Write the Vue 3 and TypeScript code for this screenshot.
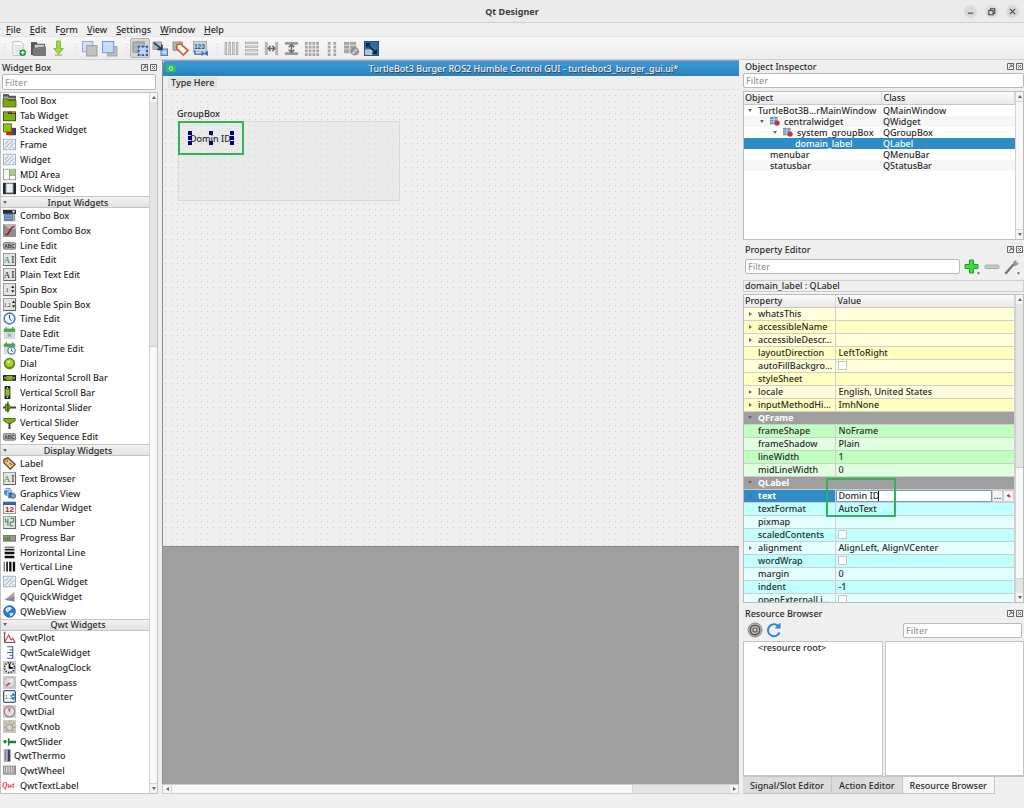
<script setup lang="ts">
import { ref } from 'vue'

interface Item { icon: string; label: string; tight?: boolean }
interface Section { title: string; items: Item[] }
interface Prop {
  name: string
  value?: string
  kind?: 'check' | 'edit' | 'group'
  arrow?: boolean
  tone: string
}

const menus = [
  { key: 'F', pre: '', post: 'ile' },
  { key: 'E', pre: '', post: 'dit' },
  { key: 'o', pre: 'F', post: 'rm' },
  { key: 'V', pre: '', post: 'iew' },
  { key: 'S', pre: '', post: 'ettings' },
  { key: 'W', pre: '', post: 'indow' },
  { key: 'H', pre: '', post: 'elp' },
]

const hatch = '<rect x=".5" y="1.5" width="15" height="13" fill="#f4f4f4" stroke="#7fa8dc"/><path d="M2 8 7 3M2 13 12 3M7 13l7-7M12 13l2-2" stroke="#bdbdbd" stroke-width="1.6"/>'
const paper = '<rect x=".5" y=".5" width="15" height="15" fill="#e3e3e3" stroke="#8b8b8b"/><path d="M15.5 1v14.500H1" fill="none" stroke="#555"/>'
const clock = '<circle cx="8" cy="8" r="6.600" fill="#f3f8ff" stroke="#4a7fc4" stroke-width="2"/><path d="M8 3.500V8l2.500 3" fill="none" stroke="#345" stroke-width="1.200"/>'
const keycap = '<rect x=".5" y="4.500" width="15" height="8" rx="1.500" fill="#b9b9b9" stroke="#666"/><text x="8" y="11" text-anchor="middle" font-size="6" font-weight="700" font-family="Liberation Sans, sans-serif" fill="#333">ABC</text>'
const serifText = (t: string, x: number, size: number, fill: string) =>
  `<text x="${x}" y="12.500" font-size="${size}" font-family="Liberation Serif, serif" fill="${fill}">${t}</text>`

const icons: Record<string, string> = {
  toolbox: '<path d="M0 0h7l1 2h8v13H0z" fill="#5d5d5d"/><path d="M1 3h5l1 2h8v1H1z" fill="#aaa"/><path d="M0 6h6l1 2h9v8H0z" fill="#7ba312" stroke="#4b6a05"/>',
  tab: '<path d="M0 3h16v12H0z" fill="#2d3a12"/><path d="M1 4h5v2h9v8H1z" fill="#7fb30f"/><path d="M7 3h3v2H7z" fill="#d33"/><path d="M11 3h4v2h-4z" fill="#e08a2a"/>',
  stack: '<rect x="7" y="6" width="9" height="9" fill="#1b3f9c"/><rect x="4" y="6" width="9" height="9" fill="#c42a12"/><rect x=".5" y="1" width="10" height="10" fill="#8fc31a" stroke="#48650b"/>',
  hatch,
  mdi: '<rect x=".5" y="1.500" width="15" height="13" fill="#fafafa" stroke="#8a8a8a"/><path d="M8 2h7v7H8z" fill="#a9cf7a"/><path d="M8 2v12M8 9h7" stroke="#888"/>',
  dock: '<path d="M0 1h16v14H0z" fill="#1f2733"/><path d="M4 2h8v11H4z" fill="#e9eef7"/><path d="M3.500 2.500h9v11h-9z" fill="none" stroke="#fff" stroke-dasharray="1 1"/>',
  combo: '<path d="M0 1h16v5H0z" fill="#2b2f36"/><path d="M11 2h4l-2 3z" fill="#fff"/><path d="M1 6h12v9H1z" fill="#5f81ad"/><path d="M2 8.500h10M2 11.500h10" stroke="#9db7da"/><path d="M13 6h2v9h-2z" fill="#999"/>',
  font: '<rect width="16" height="16" fill="#8d8d8d"/><path d="M0 0h16v6H8z" fill="#b9b9b9"/><path d="M3 13c4 1 4-3 6-6s2-4 5-4" fill="none" stroke="#b01414" stroke-width="2"/>',
  keycap,
  textedit: paper + serifText('A', 1, 11, '#2b8a3a') + serifText('I', 10, 12, '#333'),
  plain: paper + serifText('A', 1, 11, '#222') + serifText('I', 10, 12, '#222'),
  spin: paper + '<text x="3" y="11" font-size="8" font-family="Liberation Serif, serif" fill="#333">1</text><path d="m10 6 2-3 2 3zM10 9l2 3 2-3z" fill="#222"/>',
  dspin: paper + '<text x="1" y="11" font-size="7" font-family="Liberation Serif, serif" fill="#333">1.2</text><path d="m11 6 2-3 2 3zM11 9l2 3 2-3z" fill="#222"/>',
  clock,
  date: '<rect x="1" y="2" width="14" height="13" fill="#d9d9d9"/><rect x="1" y="2" width="14" height="4" fill="#3fae3f"/><path d="M4 0v3M12 0v3" stroke="#777" stroke-width="1.500"/><path d="M6 8h4v4H6z" fill="#8fb4e4"/>',
  datetime: '<rect x="1" y="2" width="14" height="13" fill="#d9d9d9"/><rect x="1" y="2" width="14" height="4" fill="#3fae3f"/><path d="M4 0v3M12 0v3" stroke="#777" stroke-width="1.500"/><circle cx="10.500" cy="10.500" r="4.500" fill="#f3f8ff" stroke="#4a7fc4" stroke-width="1.500"/><path d="M10.500 8v3l2 1" fill="none" stroke="#345"/>',
  dial: '<circle cx="8" cy="8" r="6.500" fill="#6f9a10" stroke="#4c6a10"/><circle cx="8" cy="7.500" r="4.500" fill="#a8d62f"/><circle cx="7" cy="6" r="1.800" fill="#dff38d"/>',
  hscroll: '<rect x="0" y="5" width="16" height="7" fill="#222"/><rect x="4" y="6" width="8" height="5" fill="#7fb30f"/><path d="M1 8.500 3 7v3zM15 8.500 13 7v3z" fill="#fff"/>',
  vscroll: '<rect x="2" y="0" width="7" height="16" fill="#222"/><rect x="3" y="4" width="5" height="8" fill="#8fc31a"/><path d="M5.500 1 7 3H4zM5.500 15 7 13H4z" fill="#fff"/>',
  hslider: '<path d="M0 8h16" stroke="#444" stroke-width="2.500"/><path d="M3 4h4l2 4-2 4H3z" fill="#7fb30f" stroke="#38520a"/><path d="M6 1v13" stroke="#4b6a05" stroke-width="2"/>',
  vslider: '<path d="M8 3v13" stroke="#444" stroke-width="2.500"/><path d="M1 3h14v3l-5 3H6L1 6z" fill="#7fb30f" stroke="#38520a"/>',
  label: '<path d="M1 3 6 1l9 8-6 6-8-8z" fill="#f3c183" stroke="#5c4326" stroke-width="1.500"/><circle cx="4.500" cy="4.500" r="1.200" fill="#fff" stroke="#5c4326"/><path d="m8 7 3 3" stroke="#8b5a22" stroke-width="1.500"/>',
  graphics: '<circle cx="6" cy="6" r="5" fill="#5c8fca"/><path d="M2 4c3-3 5 1 8-1" stroke="#cfe3fa" stroke-width="1.500" fill="none"/><rect x="6" y="6" width="6" height="8" fill="#3b6fb1" stroke="#e7f0fb"/><circle cx="12.500" cy="11" r="3" fill="#7aa8dc" stroke="#456"/>',
  calendar: '<rect x=".5" y="1.500" width="15" height="14" fill="#f4f4f4" stroke="#888"/><path d="M0 1h16v4H0z" fill="#3764a6"/><text x="8" y="14" text-anchor="middle" font-size="10" font-weight="700" font-family="Liberation Sans, sans-serif" fill="#c41616">12</text>',
  lcd: paper + '<path d="M3 3v4h3M6 3v9M9 3h4v4l-4 1v4h4" fill="none" stroke="#4d9465" stroke-width="1.500"/>',
  progress: '<rect x=".5" y="5.500" width="15" height="7" fill="#999" stroke="#666"/><path d="M2 7h7v5H2z" fill="#4d7d20"/><path d="M4 7v5M6.500 7v5" stroke="#8fc31a"/>',
  hline: '<path d="M2 1.500h12" stroke="#111"/><path d="M2 4.500h12" stroke="#111" stroke-width="2"/><path d="M2 8.500h12M2 13.500h12" stroke="#111" stroke-width="3"/>',
  vline: '<path d="M1.500 2v12" stroke="#111"/><path d="M5 2v12" stroke="#111" stroke-width="2"/><path d="M9 2v12M13.500 2v12" stroke="#111" stroke-width="2.800"/>',
  quick: '<path d="M2 12 14 2v12z" fill="#a8a8a8"/><path d="M2 12 14 8v6z" fill="#858585"/>',
  web: '<circle cx="8" cy="8" r="7.200" fill="#2f78c8" stroke="#2458a0"/><path d="M3 5c2-3 6-3 8-1-1 3-3 2-4 4s-4 1-4-3zM8 10c3-1 5 0 5 1-1 2-3 3-4 3z" fill="#cde4fb"/>',
  plot: '<path d="M2 2v12h13" fill="none" stroke="#345" stroke-width="1.200"/><path d="M2 14 7 5l3 6 2-2 3 5" fill="none" stroke="#e04848" stroke-width="1.500"/><path d="m.5 3 1.500-2 1.500 2" fill="none" stroke="#c33"/>',
  scale: '<path d="M12 0v16M12 1H5M12 5H8M12 8H5M12 11.500H8M12 15H5" fill="none" stroke="#4a55b5" stroke-width="1.300"/>',
  aclock: '<rect width="16" height="16" fill="#c9c9c9"/><circle cx="8" cy="8" r="6" fill="#eee" stroke="#333" stroke-width="2" stroke-dasharray="1.600 1.540"/><path d="M8 3v5.500h4" fill="none" stroke="#000" stroke-width="2"/>',
  compass: '<rect width="16" height="16" fill="#c9c9c9"/><circle cx="8" cy="8" r="6.500" fill="#dcdcdc" stroke="#b0b0b0"/><path d="m4 12 5-4" stroke="#e04040" stroke-width="2"/><path d="m8 8 4-4" stroke="#fff" stroke-width="2"/>',
  counter: '<rect x=".8" y=".8" width="14.400" height="14.400" rx="2" fill="#fff" stroke="#345e70" stroke-width="1.600"/><text x="2" y="11" font-size="7" font-family="Liberation Sans, sans-serif" fill="#1c70a8">1.3</text><path d="m10 7 2.500-4L15 7zM10 9l2.500 4L15 9z" fill="#1c70b8"/>',
  qdial: '<rect width="16" height="16" fill="#cfcfcf"/><circle cx="8" cy="8" r="6.500" fill="#e2dede" stroke="#888" stroke-width="1.400"/><path d="M8 8 6 3M8 8l1-5" stroke="#c03a3a"/>',
  knob: '<rect width="16" height="16" fill="#cbc7bd"/><circle cx="8" cy="9" r="4" fill="#d9d5ca" stroke="#8f8b80"/><path d="M8 1v2M2 3l2 2M14 3l-2 2M1 9h2M13 9h2M3 14l2-2M13 14l-2-2M9 8l2-2" stroke="#8f8b80"/>',
  qslider: '<path d="M0 8h16" stroke="#9ab89f"/><path d="M1 6h3v4H1zM6 4h2v9H6zM8 7h8v3H8z" fill="#1f7a3d"/>',
  thermo: '<rect x="1" y="0" width="8" height="16" fill="#aaa"/><path d="M3 2v12" stroke="#555" stroke-dasharray="1 1"/><rect x="6" y="1" width="3" height="14" fill="#3a3a80"/>',
  wheel: '<rect x=".5" y="2.500" width="15" height="10" fill="#ddd" stroke="#777"/><path d="M3 3v7M6 3v7M9 3v7M12 3v7M14 3v7M1 11h14" stroke="#777"/>',
  qwt: '<text x="-1" y="11" font-size="9" font-style="italic" font-weight="700" font-family="Liberation Serif, serif" fill="#f03030">Qwt</text>',
}

const sections: Section[] = [
  { title: '', items: [
    { icon: 'toolbox', label: 'Tool Box' }, { icon: 'tab', label: 'Tab Widget' }, { icon: 'stack', label: 'Stacked Widget' },
    { icon: 'hatch', label: 'Frame' }, { icon: 'hatch', label: 'Widget' }, { icon: 'mdi', label: 'MDI Area' }, { icon: 'dock', label: 'Dock Widget' },
  ] },
  { title: 'Input Widgets', items: [
    { icon: 'combo', label: 'Combo Box' }, { icon: 'font', label: 'Font Combo Box' }, { icon: 'keycap', label: 'Line Edit' },
    { icon: 'textedit', label: 'Text Edit' }, { icon: 'plain', label: 'Plain Text Edit' }, { icon: 'spin', label: 'Spin Box' },
    { icon: 'dspin', label: 'Double Spin Box' }, { icon: 'clock', label: 'Time Edit' }, { icon: 'date', label: 'Date Edit' },
    { icon: 'datetime', label: 'Date/Time Edit' }, { icon: 'dial', label: 'Dial' }, { icon: 'hscroll', label: 'Horizontal Scroll Bar' },
    { icon: 'vscroll', label: 'Vertical Scroll Bar' }, { icon: 'hslider', label: 'Horizontal Slider' }, { icon: 'vslider', label: 'Vertical Slider' },
    { icon: 'keycap', label: 'Key Sequence Edit' },
  ] },
  { title: 'Display Widgets', items: [
    { icon: 'label', label: 'Label' }, { icon: 'textedit', label: 'Text Browser' }, { icon: 'graphics', label: 'Graphics View' },
    { icon: 'calendar', label: 'Calendar Widget' }, { icon: 'lcd', label: 'LCD Number' }, { icon: 'progress', label: 'Progress Bar' },
    { icon: 'hline', label: 'Horizontal Line' }, { icon: 'vline', label: 'Vertical Line' }, { icon: 'hatch', label: 'OpenGL Widget' },
    { icon: 'quick', label: 'QQuickWidget' }, { icon: 'web', label: 'QWebView' },
  ] },
  { title: 'Qwt Widgets', items: [
    { icon: 'plot', label: 'QwtPlot' }, { icon: 'scale', label: 'QwtScaleWidget' }, { icon: 'aclock', label: 'QwtAnalogClock' },
    { icon: 'compass', label: 'QwtCompass' }, { icon: 'counter', label: 'QwtCounter' }, { icon: 'qdial', label: 'QwtDial' },
    { icon: 'knob', label: 'QwtKnob' }, { icon: 'qslider', label: 'QwtSlider' }, { icon: 'thermo', label: 'QwtThermo', tight: true },
    { icon: 'wheel', label: 'QwtWheel' }, { icon: 'qwt', label: 'QwtTextLabel' },
  ] },
]

const gray = '#a8a8a8'
const gridDots = (cols: number[]) => cols.map((x) => [1, 5, 9, 13].map((y) => `<rect x="${x}" y="${y}" width="3" height="3" fill="${gray}"/>`).join('')).join('')

const toolGroups: { name: string; art: string; on?: boolean }[][] = [
  [
    { name: 'New', art: '<path d="M2 .5h8l3 3v12H2z" fill="#fafafa" stroke="#bbb"/><path d="M4 5h7M4 7.500h7M4 10h6M4 12.500h4" stroke="#c9c9c9"/><circle cx="12.500" cy="12.500" r="3.500" fill="#1c8f3a"/><path d="M12.500 10.500v4M10.500 12.500h4" stroke="#fff" stroke-width="1.300"/>' },
    { name: 'Open', art: '<path d="M0 1h6l1 2h8v12H0z" fill="#585858"/><path d="M4 4h10v4H4z" fill="#d0d0d0"/><path d="M2 7h5l1-1h8v10H2z" fill="#787878"/>' },
    { name: 'Save', art: '<path d="M6 0h4v8h3l-5 6-5-6h3z" fill="#a5d945" stroke="#7ab51d"/><path d="M4 15h8" stroke="#aaa" stroke-width="1.500"/>' },
  ],
  [
    { name: 'Send to back', art: '<rect x=".5" y=".5" width="11" height="11" fill="#cfe0f8" stroke="#8fa8cc"/><rect x="5" y="5" width="11" height="11" fill="#c2c2c2" stroke="#999"/>' },
    { name: 'Bring to front', art: '<rect x="6" y="6" width="10" height="10" fill="#bcbcbc" stroke="#a4a4a4"/><rect x=".5" y=".5" width="12" height="12" fill="#c4dcfa" stroke="#6f96cf"/>' },
  ],
  [
    { name: 'Edit widgets', on: true, art: '<path d="M0 1h12v11H0z" fill="#b4b4b4" stroke="#909090"/><rect x="6" y="6" width="9" height="9" fill="#bcd5f8" stroke="#3d78c8" stroke-dasharray="2 1"/><path d="M5 5h2v2H5zM9.500 5h2v2h-2zM14 5h2v2h-2zM5 9.500h2v2H5zM14 9.500h2v2h-2zM5 14h2v2H5zM9.500 14h2v2h-2zM14 14h2v2h-2z" fill="#1f4f9a"/>' },
    { name: 'Edit signals and slots', art: '<path d="M0 1h9v8H0z" fill="#b8b8b8" stroke="#999"/><rect x="8.500" y="8.500" width="7" height="7" fill="#9fc1ee" stroke="#4a7cc0"/><path d="M1 2 9 8.500M9.500 4v5h-5" stroke="#243a52" stroke-width="1.800" fill="none"/><path d="M10 12h4" stroke="#fff"/>' },
    { name: 'Edit buddies', art: '<path d="M0 1h10v9H0z" fill="#b0b0b0" stroke="#909090"/><path d="m4 4 4-1 8 7-5 5-7-7z" fill="#fff" stroke="#d85a28" stroke-width="1.800"/>' },
    { name: 'Edit tab order', art: '<rect x=".5" y=".5" width="14" height="11" fill="#cdd3dc" stroke="#aaa"/><text x="1" y="8" font-size="7" font-weight="700" font-family="Liberation Sans, sans-serif" fill="#235ca5">123</text><path d="M2 10v4h8" fill="none" stroke="#2f6cb5" stroke-width="1.500"/><path d="M9 10.500 12 13l4-3v6l-4-2-3 2z" fill="#3f78bc"/>' },
  ],
  [
    { name: 'Lay out horizontally', art: '<path d="M2 1v14M6 1v14M10 1v14M14 1v14" stroke="#a4a4a4" stroke-width="2.600"/><path d="M2 2v12M6 2v12M10 2v12M14 2v12" stroke="#dcdcdc"/>' },
    { name: 'Lay out vertically', art: '<path d="M1 2h14M1 6h14M1 10h14M1 14h14" stroke="#a4a4a4" stroke-width="2.600"/><path d="M2 2h12M2 6h12M2 10h12M2 14h12" stroke="#dcdcdc"/>' },
    { name: 'Horizontal splitter', art: '<path d="M1 1h3v14H1zM12 1h3v14h-3z" fill="#b4b4b4"/><path d="M5 8h6M7 5 4.500 8 7 11M9 5l2.500 3L9 11" stroke="#666" stroke-width="1.500" fill="none"/>' },
    { name: 'Vertical splitter', art: '<path d="M1 1h14v3H1zM1 12h14v3H1z" fill="#999"/><path d="M8 4v8M5 6.500 8 4l3 2.500M5 9.500 8 12l3-2.500" stroke="#666" stroke-width="1.500" fill="none"/>' },
    { name: 'Lay out in a grid', art: gridDots([1, 5, 9, 13]) },
    { name: 'Lay out in a form', art: gridDots([4, 10]) },
    { name: 'Break layout', art: '<path d="M0 1h13v12H0z" fill="#a5a5a5"/><path d="M0 4.500h13M0 8.500h13M6 1v12" stroke="#ddd"/><circle cx="11.500" cy="11" r="4" fill="#999" stroke="#888"/><path d="m9 13.500 5-5" stroke="#ddd" stroke-width="1.500"/>' },
    { name: 'Adjust size', art: '<rect x=".5" y=".5" width="15" height="15" fill="#2f6da8" stroke="#234a70"/><path d="M1 9h8v6H1z" fill="#b4c3d4"/><path d="M4 4l8 8M3 7V3h4M13 9v4H9" stroke="#0d2236" stroke-width="1.700" fill="none"/>' },
  ],
]

const tree = [
  { name: 'TurtleBot3B...rMainWindow', cls: 'QMainWindow', level: 0, arrow: true },
  { name: 'centralwidget', cls: 'QWidget', level: 1, arrow: true, icon: true },
  { name: 'system_groupBox', cls: 'QGroupBox', level: 2, arrow: true, icon: true },
  { name: 'domain_label', cls: 'QLabel', level: 3, selected: true },
  { name: 'menubar', cls: 'QMenuBar', level: 1 },
  { name: 'statusbar', cls: 'QStatusBar', level: 1 },
]

const props: Prop[] = [
  { name: 'whatsThis', arrow: true, tone: 'y1' },
  { name: 'accessibleName', arrow: true, tone: 'y2' },
  { name: 'accessibleDescr…', arrow: true, tone: 'y1' },
  { name: 'layoutDirection', value: 'LeftToRight', tone: 'y2' },
  { name: 'autoFillBackgro…', kind: 'check', tone: 'y1' },
  { name: 'styleSheet', tone: 'y2' },
  { name: 'locale', value: 'English, United States', arrow: true, tone: 'y1' },
  { name: 'inputMethodHi…', value: 'ImhNone', arrow: true, tone: 'y2' },
  { name: 'QFrame', kind: 'group', tone: 'grp' },
  { name: 'frameShape', value: 'NoFrame', tone: 'g2' },
  { name: 'frameShadow', value: 'Plain', tone: 'g1' },
  { name: 'lineWidth', value: '1', tone: 'g2' },
  { name: 'midLineWidth', value: '0', tone: 'g1' },
  { name: 'QLabel', kind: 'group', tone: 'grp' },
  { name: 'text', kind: 'edit', arrow: true, tone: 'current' },
  { name: 'textFormat', value: 'AutoText', tone: 'c2' },
  { name: 'pixmap', tone: 'c1' },
  { name: 'scaledContents', kind: 'check', tone: 'c2' },
  { name: 'alignment', value: 'AlignLeft, AlignVCenter', arrow: true, tone: 'c1' },
  { name: 'wordWrap', kind: 'check', tone: 'c2' },
  { name: 'margin', value: '0', tone: 'c1' },
  { name: 'indent', value: '-1', tone: 'c2' },
  { name: 'openExternalLi…', kind: 'check', tone: 'c1' },
]

const labelText = ref('Domin ID')
const tabs = ['Signal/Slot Editor', 'Action Editor', 'Resource Browser']
const activeTab = ref('Resource Browser')
</script>

<template>
  <div class="window">
    <header class="titlebar">
      <h1>Qt Designer</h1>
      <div class="winbtns">
        <button aria-label="Minimize"><svg viewBox="0 0 12 12"><path d="M3.500 7.500h5" /></svg></button>
        <button aria-label="Restore"><svg viewBox="0 0 12 12"><path d="M3.500 5h4v4h-4zM5 5V3.500h4v4H7.500" /></svg></button>
        <button aria-label="Close"><svg viewBox="0 0 12 12"><path d="m3.500 3.500 5 5M8.500 3.500l-5 5" /></svg></button>
      </div>
    </header>

    <nav class="menubar">
      <button v-for="m in menus" :key="m.post">{{ m.pre }}<u>{{ m.key }}</u>{{ m.post }}</button>
    </nav>

    <div class="toolbar">
      <div v-for="(g, i) in toolGroups" :key="i" class="toolgroup">
        <span class="grip"></span>
        <button v-for="t in g" :key="t.name" :class="{ on: t.on }" :aria-label="t.name">
          <svg viewBox="0 0 16 16" v-html="t.art"></svg>
        </button>
      </div>
    </div>

    <main class="body">
      <aside class="dock left">
        <div class="docktitle">
          <h2>Widget Box</h2>
          <button aria-label="Float"><svg viewBox="0 0 7 7"><path d="M.5.5h6v6h-6zM2 5l3-3M3 2h2v2" /></svg></button>
          <button aria-label="Close"><svg viewBox="0 0 7 7"><path d="M.5.5h6v6h-6zM2 2l3 3M5 2 2 5" /></svg></button>
        </div>
        <input class="field wfilter" type="text" placeholder="Filter" aria-label="Filter widgets">
        <div class="wbox">
          <div class="wlist">
            <template v-for="s in sections" :key="s.title">
              <button v-if="s.title" class="whead"><i class="down"></i><span>{{ s.title }}</span></button>
              <div v-for="it in s.items" :key="it.label" class="witem" :class="{ tight: it.tight }">
                <svg viewBox="0 0 16 16" v-html="icons[it.icon]"></svg><span>{{ it.label }}</span>
              </div>
            </template>
          </div>
          <div class="vscroll"><b class="cap"><i class="up"></i></b><span class="gap s1"></span><span class="thumb s2"></span><b class="cap"><i class="down"></i></b></div>
        </div>
      </aside>

      <section class="center">
        <div class="canvas">
          <div class="form">
            <div class="formtitle">
              <svg viewBox="0 0 12 10"><rect x="1" y="1" width="10" height="7" rx="1" fill="#2fc24f" /><circle cx="6" cy="4.500" r="1.800" fill="none" stroke="#c5f5cf" /></svg>
              <span>TurtleBot3 Burger ROS2 Humble Control GUI - turtlebot3_burger_gui.ui*</span>
            </div>
            <div class="formmenu"><button>Type Here</button></div>
            <div class="dots">
              <div class="gtitle">GroupBox</div>
              <div class="gframe">
                <div class="mark">
                  <div class="handles">
                    <span>{{ labelText }}</span>
                    <svg viewBox="0 0 46 14"><path d="M0 0h4v4H0zM0 5h4v4H0zM0 10h4v4H0zM21 0h4v4h-4zM21 10h4v4h-4zM42 0h4v4h-4zM42 5h4v4h-4zM42 10h4v4h-4z" /></svg>
                  </div>
                </div>
              </div>
            </div>
          </div>
        </div>
        <div class="hscroll"><b class="cap"><i class="lt"></i></b><span class="thumb"></span><span class="gap"></span><b class="cap"><i class="rt"></i></b></div>
      </section>

      <aside class="dock right">
        <div class="docktitle">
          <h2>Object Inspector</h2>
          <button aria-label="Float"><svg viewBox="0 0 7 7"><path d="M.5.5h6v6h-6zM2 5l3-3M3 2h2v2" /></svg></button>
          <button aria-label="Close"><svg viewBox="0 0 7 7"><path d="M.5.5h6v6h-6zM2 2l3 3M5 2 2 5" /></svg></button>
        </div>
        <input class="field" type="text" placeholder="Filter" aria-label="Filter objects">
        <div class="tablebox tree">
          <div class="scrollarea">
            <table>
              <colgroup><col class="c51"><col></colgroup>
              <thead><tr><th>Object</th><th>Class</th></tr></thead>
              <tbody>
                <tr v-for="n in tree" :key="n.name" :class="{ selected: n.selected }">
                  <td><div class="node" :class="'l' + n.level">
                    <span class="slot"><i v-if="n.arrow" class="down"></i></span>
                    <svg v-if="n.icon" viewBox="0 0 12 12"><path d="M0 1h9v9H0z" fill="#7393b5" /><path d="M0 4h9M0 7h9M4.500 1v9" stroke="#c9d6e4" /><circle cx="8.500" cy="8.500" r="3.200" fill="#b93a42" /></svg>
                    <span>{{ n.name }}</span>
                  </div></td>
                  <td>{{ n.cls }}</td>
                </tr>
              </tbody>
            </table>
          </div>
          <div class="vscroll"><b class="cap"><i class="up"></i></b><span class="thumb"></span><b class="cap"><i class="down"></i></b></div>
        </div>

        <div class="docktitle second">
          <h2>Property Editor</h2>
          <button aria-label="Float"><svg viewBox="0 0 7 7"><path d="M.5.5h6v6h-6zM2 5l3-3M3 2h2v2" /></svg></button>
          <button aria-label="Close"><svg viewBox="0 0 7 7"><path d="M.5.5h6v6h-6zM2 2l3 3M5 2 2 5" /></svg></button>
        </div>
        <div class="propbar">
          <input class="field" type="text" placeholder="Filter" aria-label="Filter properties">
          <button aria-label="Add property"><svg viewBox="0 0 16 16"><path d="M5.500 1h4v4.500H14v4H9.500V14h-4V9.500H1v-4h4.500z" fill="#3fdc3f" stroke="#1ca61c" /><path d="M13 13.500h3l-1.500 2z" fill="#444" /></svg></button>
          <button aria-label="Remove property"><svg viewBox="0 0 16 16"><rect x="1" y="6" width="14" height="3.500" rx="1" fill="#c9c9c9" stroke="#aaa" /></svg></button>
          <button aria-label="Configure"><svg viewBox="0 0 16 16"><path d="m2 14 8-9" stroke="#777" stroke-width="2.500" stroke-linecap="round" /><path d="M9 5c0-3 2-4 4-4l-1 2 2 1 1-1c0 2-2 4-5 4z" fill="#999" /><path d="M13 13.500h3l-1.500 2z" fill="#444" /></svg></button>
        </div>
        <div class="objname">domain_label : QLabel</div>
        <div class="tablebox props">
          <div class="scrollarea">
            <table>
              <colgroup><col class="c34"><col></colgroup>
              <thead><tr><th>Property</th><th>Value</th></tr></thead>
              <tbody>
                <tr v-for="p in props" :key="p.name" :class="p.tone">
                  <td :colspan="p.kind === 'group' ? 2 : 1"><div class="pname">
                    <span class="slot"><i v-if="p.kind === 'group'" class="down"></i><i v-else-if="p.arrow" class="rt"></i></span>
                    <label v-if="p.kind === 'check' || p.kind === 'edit'" :for="'p-' + p.name">{{ p.name }}</label>
                    <span v-else>{{ p.name }}</span>
                  </div></td>
                  <td v-if="p.kind !== 'group'">
                    <input v-if="p.kind === 'check'" :id="'p-' + p.name" type="checkbox">
                    <div v-else-if="p.kind === 'edit'" class="editor">
                      <input :id="'p-' + p.name" v-model="labelText" type="text">
                      <span class="caret"></span>
                      <button aria-label="Edit text">...</button>
                      <button aria-label="Reset"><svg viewBox="0 0 8 8"><path d="M1 3.500 3.500 1v1.500C6 2.500 6.500 5 5.500 7 5.500 5 4.500 4.500 3.500 4.500V6z" fill="#c41e1e" /></svg></button>
                      <span class="ring"></span>
                    </div>
                    <template v-else>{{ p.value }}</template>
                  </td>
                </tr>
              </tbody>
            </table>
          </div>
          <div class="vscroll"><b class="cap"><i class="up"></i></b><span class="gap p1"></span><span class="thumb p2"></span><span class="gap p3"></span><b class="cap"><i class="down"></i></b></div>
        </div>

        <div class="docktitle third">
          <h2>Resource Browser</h2>
          <button aria-label="Float"><svg viewBox="0 0 7 7"><path d="M.5.5h6v6h-6zM2 5l3-3M3 2h2v2" /></svg></button>
          <button aria-label="Close"><svg viewBox="0 0 7 7"><path d="M.5.5h6v6h-6zM2 2l3 3M5 2 2 5" /></svg></button>
        </div>
        <div class="resbar">
          <button aria-label="Edit resources"><svg viewBox="0 0 16 16"><circle cx="8" cy="8" r="7" fill="#bbb" stroke="#888" /><circle cx="8" cy="8" r="4.800" fill="none" stroke="#555" stroke-width="1.400" /><circle cx="8" cy="8" r="2" fill="#ddd" stroke="#555" stroke-width="1.200" /></svg></button>
          <button aria-label="Reload"><svg viewBox="0 0 16 16"><path d="M13.500 10.500A6 6 0 1 1 12 3.800" fill="none" stroke="#2b86d0" stroke-width="2" /><path d="M14.500.5v6h-6z" fill="#2b86d0" /></svg></button>
          <input class="field" type="text" placeholder="Filter" aria-label="Filter resources">
        </div>
        <div class="panes"><div>&lt;resource root&gt;</div><div></div></div>
        <div class="tabs" role="tablist">
          <button v-for="t in tabs" :key="t" role="tab" :aria-selected="t === activeTab" :class="{ active: t === activeTab }" @click="activeTab = t">{{ t }}</button>
        </div>
      </aside>
    </main>
  </div>
</template>

<style>
body { margin: 0; background: #efefef; }
</style>

<style scoped>
* { box-sizing: border-box; }
.window {
  display: flex; flex-direction: column; min-height: 100vh; padding-bottom: 14px;
  background: #efefef; color: #2a2a2a;
  font: 500 9px/11px "Noto Sans", "Open Sans", sans-serif;
}
button, input { font: inherit; color: inherit; margin: 0; padding: 0; border: 0; background: none; }
button { white-space: nowrap; }
h1, h2 { margin: 0; font: inherit; }
svg { display: block; flex: none; overflow: visible; }

.titlebar { display: grid; grid-template-columns: 1fr auto 1fr; align-items: center; height: 23px; background: #ebebeb; border-bottom: 1px solid #d0d0d0; }
.titlebar h1 { grid-column: 2; font-weight: 700; color: #3c3c3c; }
.winbtns { display: flex; justify-content: flex-end; gap: 8px; padding-right: 5px; }
.winbtns button { width: 13px; height: 13px; border-radius: 50%; background: #dadada; }
.winbtns svg { width: 13px; height: 13px; fill: none; stroke: #444; }

.menubar { display: flex; gap: 1px; height: 13px; align-items: center; padding-left: 2px; }
.menubar button { padding: 0 4px; }
.menubar u { text-underline-offset: 1px; }

.toolbar { display: flex; height: 24px; border-bottom: 1px solid #cfcfcf; border-top: 1px solid #e4e4e4; background: linear-gradient(#f8f8f8, #ececec); }
.toolgroup { display: flex; align-items: center; }
.toolgroup + .toolgroup { margin-left: 3px; }
.grip { width: 5px; height: 12px; margin: 0 1px 0 2px; background: conic-gradient(from 90deg at 2px 2px, #cfcfcf 90deg, transparent 0) 0 0 / 3px 3px; }
.toolgroup button { display: grid; place-items: center; width: 20px; height: 20px; }
.toolgroup button.on { background: #d6d6d6; border: 1px solid #b5b5b5; border-radius: 2px; }
.toolgroup svg { width: 15px; height: 15px; }

.body { display: grid; grid-template-columns: 158px minmax(0, 1fr) 281px; column-gap: 4px; flex: 1; }
.dock { display: flex; flex-direction: column; min-width: 0; }
.docktitle { display: flex; align-items: center; gap: 2px; height: 13px; padding: 0 1px 0 2px; flex: none; }
.docktitle h2 { flex: 1; }
.docktitle button svg { width: 7px; height: 7px; fill: none; stroke: #555; stroke-width: .9; }
.field { width: 100%; height: 15px; flex: none; padding: 0 2px; background: #fff; border: 1px solid #b9b9b9; border-radius: 2px; }
.field::placeholder { color: #9a9a9a; opacity: 1; }
.left .docktitle { height: 14px; }
.left .field { width: auto; margin: 0 2px; height: 16px; }

.wbox { flex: 1; display: flex; margin-top: 2px; border: 1px solid #c2c2c2; background: #fff; }
.wlist { flex: 1; display: flex; flex-direction: column; }
.witem { flex: 1; display: flex; align-items: center; gap: 4px; padding-left: 2px; min-height: 0; }
.witem svg { width: 13px; height: 13px; margin: -1px 0; }
.witem.tight svg { margin-right: -6px; }
.whead { display: flex; align-items: center; height: 12px; flex: none; padding-left: 2px; border-top: 1px solid #c4c4c4; border-bottom: 1px solid #c4c4c4; background: linear-gradient(#f2f2f2, #e2e2e2); }
.whead span { flex: 1; text-align: center; }

.down, .up, .lt, .rt { display: inline-block; width: 0; height: 0; border: 2px solid transparent; }
.down { border-top: 3px solid #666; border-bottom: 0; }
.up { border-bottom: 3px solid #666; border-top: 0; }
.lt { border-right: 3px solid #666; border-left: 0; }
.rt { border-left: 3px solid #666; border-right: 0; }

.vscroll { display: flex; flex-direction: column; width: 8px; flex: none; border-left: 1px solid #d2d2d2; }
.hscroll { display: flex; height: 10px; flex: none; border: 1px solid #cdcdcd; }
.cap { display: grid; place-items: center; flex: none; width: 8px; height: 8px; background: #f4f4f4; }
.vscroll .cap { width: 7px; height: 9px; }
.gap { flex: 1; background: #e4e4e4; }
.thumb { flex: 1; background: #f8f8f8; border: solid #d2d2d2; border-width: 1px 0; }
.s1 { flex: 245; } .s2 { flex: 437; }
.p1 { flex: 165; } .p2 { flex: 111; } .p3 { flex: 14; }
.hscroll .thumb { flex: 461; border-width: 0 1px; } .hscroll .gap { flex: 97; }

.center { display: flex; flex-direction: column; min-width: 0; }
.canvas { flex: 1; background: #9f9f9f; padding-top: 1px; border-left: 1px solid #8e8e8e; }
.form { background: #efefef; border-bottom: 1px solid #8a8a8a; }
.formtitle { display: flex; align-items: center; height: 15px; padding-left: 2px; color: #f2f2f2; background: linear-gradient(#3a9bdb, #2a82bd); border-radius: 3px 0 0; text-shadow: 1px 1px 0 #444; }
.formtitle svg { width: 12px; height: 10px; }
.formtitle span { flex: 1; text-align: center; padding-left: 131px; white-space: nowrap; }
.formmenu { height: 14px; padding: 1px 5px; border-bottom: 1px solid #e0e0e0; }
.formmenu button { height: 11px; padding: 0 3px; background: #e4e4e4; display: block; }
.dots { position: relative; height: 456px; background: conic-gradient(from 90deg at 5px 5px, #cacaca 90deg, transparent 0) -3px 0 / 6px 6px; }
.gtitle { position: absolute; left: 14px; top: 18px; }
.gframe { position: absolute; left: 15px; top: 31px; width: 222px; height: 80px; border: 1px solid #d8d8d8; background: rgba(228, 228, 228, .45); }
.mark { position: absolute; left: -1px; top: -1px; width: 66px; height: 34px; border: 2px solid #2fb457; }
.handles { position: absolute; left: 8px; top: 8px; width: 46px; height: 14px; }
.handles span { position: absolute; left: 2px; top: 2px; white-space: nowrap; }
.handles svg { position: absolute; inset: 0; width: 46px; height: 14px; fill: #00007a; }

.tablebox { display: flex; border: 1px solid #bdbdbd; background: #fff; }
.scrollarea { flex: 1; min-width: 0; overflow: hidden; }
table { width: 100%; table-layout: fixed; border-collapse: collapse; }
.c51 { width: 51%; }
.c34 { width: 34%; }
th { height: 12px; padding: 0 1px; font-weight: inherit; text-align: left; background: linear-gradient(#fbfbfb, #e8e8e8); border-bottom: 1px solid #c8c8c8; border-right: 1px solid #d8d8d8; }
td { padding: 0 0 0 1px; white-space: nowrap; }
.tree { height: 149px; margin-top: 3px; flex: none; }
.tree td { height: 11px; line-height: 11px; }
.tree tbody tr:nth-child(even) { background: #f6f6f6; }
.tree tbody tr.selected { background: #308cc6; color: #fff; }
.node, .pname { display: flex; align-items: center; height: 11px; }
.slot { width: 13px; flex: none; display: flex; justify-content: center; padding-right: 3px; }
.node svg { width: 10px; height: 10px; margin-right: 4px; }
.l1 { padding-left: 12px; }
.l2 { padding-left: 25px; }
.l3 { padding-left: 37px; }

.second { margin-top: 3px; }
.propbar { display: flex; align-items: center; padding: 0 4px 0 2px; margin-top: 2px; gap: 4px; height: 17px; flex: none; }
.propbar .field { flex: 1; min-width: 0; }
.propbar button svg, .resbar button svg { width: 16px; height: 16px; }
.objname { margin-top: 5px; padding: 0 1px; height: 12px; border: 1px solid #cdcdcd; line-height: 10px; flex: none; }
.props { flex: 1 0 0; margin-top: 2px; min-height: 308px; }
.props .scrollarea { height: 0; min-height: 100%; }
.props tbody td { height: 13px; border: 1px solid #cfcfcf; border-left: 0; padding: 0 0 0 2px; line-height: 12px; }
.props tbody td:first-child { padding-left: 1px; }
.props td input[type="checkbox"] { appearance: none; display: block; width: 9px; height: 9px; background: #fff; border: 1px solid #c6c6c6; }
.y1 { background: #ffffdc; } .y2 { background: #ffffbf; }
.g1 { background: #dfffdf; } .g2 { background: #bfffbf; }
.c1 { background: #e3ffff; } .c2 { background: #bfffff; }
.grp { background: #9f9f9f; color: #fff; font-weight: 700; }
.current td:first-child { background: #308cc6; color: #fff; font-weight: 700; }
.props tbody .current td + td { padding-left: 0; }
.editor { position: relative; display: flex; height: 12px; }
.editor input { flex: 1; min-width: 0; height: 12px; padding: 0 1px; background: #fff; border: 1px solid #6d9fc6; }
.editor button { display: grid; place-items: center; width: 11px; height: 12px; background: #f4f4f4; border: 1px solid #ccc; color: #222; line-height: 8px; }
.editor svg { width: 6px; height: 6px; }
.caret { position: absolute; left: 42px; top: 1px; width: 1px; height: 10px; background: #000; }
.ring { position: absolute; left: -10px; top: -12px; width: 70px; height: 39px; border: 2px solid #2fb457; z-index: 2; }

.third { margin-top: 4px; }
.resbar { display: flex; align-items: center; gap: 3px; height: 20px; padding: 0 2px 0 4px; flex: none; }
.resbar .field { width: 119px; margin-left: auto; }
.panes { display: grid; grid-template-columns: 1fr 1fr; gap: 2px; height: 136px; margin-top: 1px; flex: none; border-bottom: 1px solid #c4c4c4; }
.panes div { background: #fff; border: 1px solid #c4c4c4; padding-left: 14px; }
.tabs { display: flex; height: 17px; flex: none; }
.tabs button { padding: 0 7px; background: #dcdcdc; border: 1px solid #c6c6c6; border-top: 0; border-left: 0; }
.tabs button.active { background: #f6f6f6; }
</style>
